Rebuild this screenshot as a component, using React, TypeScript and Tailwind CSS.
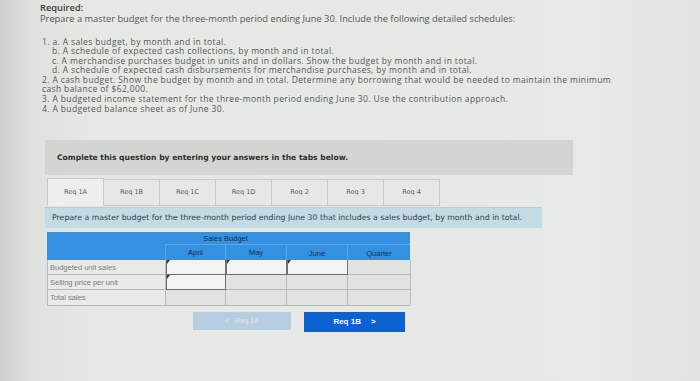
import React from "react";

const tabs = ["Req 1A", "Req 1B", "Req 1C", "Req 1D", "Req 2", "Req 3", "Req 4"];

function Cell({ input }: { input?: boolean }) {
  return (
    <div
      className={
        "relative border-r border-b " +
        (input
          ? "bg-[#f3f4f1] border-[#6e7074] border-l border-l-[#6e7074]"
          : "bg-[#e2e3df] border-[#b9bab6]")
      }
    >
      {input && (
        <div className="absolute left-0 top-0 w-0 h-0 border-t-[4px] border-t-[#2a3a60] border-r-[3px] border-r-transparent" />
      )}
    </div>
  );
}

export default function App() {
  return (
    <div className="w-[700px] h-[381px] overflow-hidden bg-[linear-gradient(90deg,#cfd0cc_0px,#dfe1dc_30px,#e6e8e3_90px,#e7e9e4_600px,#e2e4df_700px)] text-[#55575a] font-['Open_Sans',sans-serif] relative">
      <div className="pl-[40px] pt-[2px] text-[9.3px] leading-[11px]">
        <div className="font-semibold text-[#3d3e40]">Required:</div>
        <div>
          Prepare a master budget for the three-month period ending June 30. Include the following detailed schedules:
        </div>
        <div className="mt-[13px] pl-[2px] leading-[9.4px] text-[8.5px] tracking-[0.37px]">
          <div>1. a. A sales budget, by month and in total.</div>
          <div className="pl-[10px]">b. A schedule of expected cash collections, by month and in total.</div>
          <div className="pl-[10px]">c. A merchandise purchases budget in units and in dollars. Show the budget by month and in total.</div>
          <div className="pl-[10px]">d. A schedule of expected cash disbursements for merchandise purchases, by month and in total.</div>
          <div>2. A cash budget. Show the budget by month and in total. Determine any borrowing that would be needed to maintain the minimum</div>
          <div>cash balance of $62,000.</div>
          <div className="mt-[1px]">3. A budgeted income statement for the three-month period ending June 30. Use the contribution approach.</div>
          <div>4. A budgeted balance sheet as of June 30.</div>
        </div>
      </div>

      <div className="ml-[45px] mt-[27px] w-[528px] h-[35px] bg-[#d3d5d1] flex items-center pl-[12px] font-['DejaVu_Sans',sans-serif] font-bold text-[7.6px] text-[#2e2f31]">
        Complete this question by entering your answers in the tabs below.
      </div>

      <div className="ml-[47px] mt-[3px] flex items-end h-[28px]">
        {tabs.map((t, i) => (
          <div
            key={t}
            className={
              "w-[57px] flex items-center justify-center font-['DejaVu_Sans',sans-serif] text-[6.5px] text-[#55575a] border border-[#c9cac6] " +
              (i === 0 ? "h-[28px] bg-[#eeefeb] border-b-0" : "h-[27px] bg-[#e7e8e4] -ml-[1px]")
            }
          >
            {t}
          </div>
        ))}
      </div>

      <div className="ml-[45px] mt-[1px] w-[497px] h-[21px] bg-[#c2dbe5] border-t border-[#b3cfd9] flex items-center pl-[7px] font-['DejaVu_Sans',sans-serif] text-[7.8px] text-[#3a3c3e]">
        Prepare a master budget for the three-month period ending June 30 that includes a sales budget, by month and in total.
      </div>

      <div className="ml-[47px] mt-[4px] w-[363px] font-['Liberation_Sans',sans-serif]">
        <div className="grid grid-cols-[118px_60px_61px_61px_63px] bg-[#3391e0]">
          <div className="h-[12px]" />
          <div className="col-span-2 h-[12px] flex items-end justify-center text-[7.5px] text-[#1d2f4f]">Sales Budget</div>
          <div />
          <div />
          <div className="h-[16px]" />
          <div className="h-[16px] flex items-center justify-center text-[7.5px] text-[#1d2f4f] border-t border-l border-[#5aa6e8]">April</div>
          <div className="h-[16px] flex items-center justify-center text-[7.5px] text-[#1d2f4f] border-t border-l border-[#5aa6e8]">May</div>
          <div className="h-[16px] flex items-end pb-[1px] justify-center text-[7.5px] text-[#1d2f4f] border-t border-l border-[#5aa6e8]">June</div>
          <div className="h-[16px] flex items-end pb-[1px] justify-center text-[7.5px] text-[#1d2f4f] border-t border-l border-[#5aa6e8]">Quarter</div>
        </div>
        <div className="grid grid-cols-[118px_60px_61px_61px_63px] grid-rows-[15px_15px_15px] border-l border-b border-[#b9bab6] bg-[#e2e3df]">
          <div className="flex items-center pl-[2px] text-[7.5px] text-[#7a7c7f] border-r border-b border-[#b9bab6] bg-[#e9eae6]">Budgeted unit sales</div>
          <Cell input />
          <Cell input />
          <Cell input />
          <Cell />
          <div className="flex items-center pl-[2px] text-[7.5px] text-[#7a7c7f] border-r border-b border-[#b9bab6] bg-[#e9eae6]">Selling price per unit</div>
          <Cell input />
          <Cell />
          <Cell />
          <Cell />
          <div className="flex items-center pl-[2px] text-[7.5px] text-[#7a7c7f] border-r border-[#b9bab6] bg-[#e9eae6]">Total sales</div>
          <div className="border-r border-[#b9bab6]" />
          <div className="border-r border-[#b9bab6]" />
          <div className="border-r border-[#b9bab6]" />
          <div className="border-r border-[#b9bab6]" />
        </div>
      </div>

      <div className="flex mt-[6px] ml-[193px] gap-[13px] font-['Liberation_Sans',sans-serif]">
        <div className="w-[98px] h-[18px] bg-[#b9cde0] flex items-center justify-center gap-[6px] text-[7px] text-[#dbe6f0]">
          <span>&lt;</span>
          <span>Req 1A</span>
        </div>
        <div className="w-[101px] h-[20px] bg-[#0c63cf] flex items-center justify-center gap-[10px] text-[8px] font-bold text-white">
          <span>Req 1B</span>
          <span>&gt;</span>
        </div>
      </div>
    </div>
  );
}
